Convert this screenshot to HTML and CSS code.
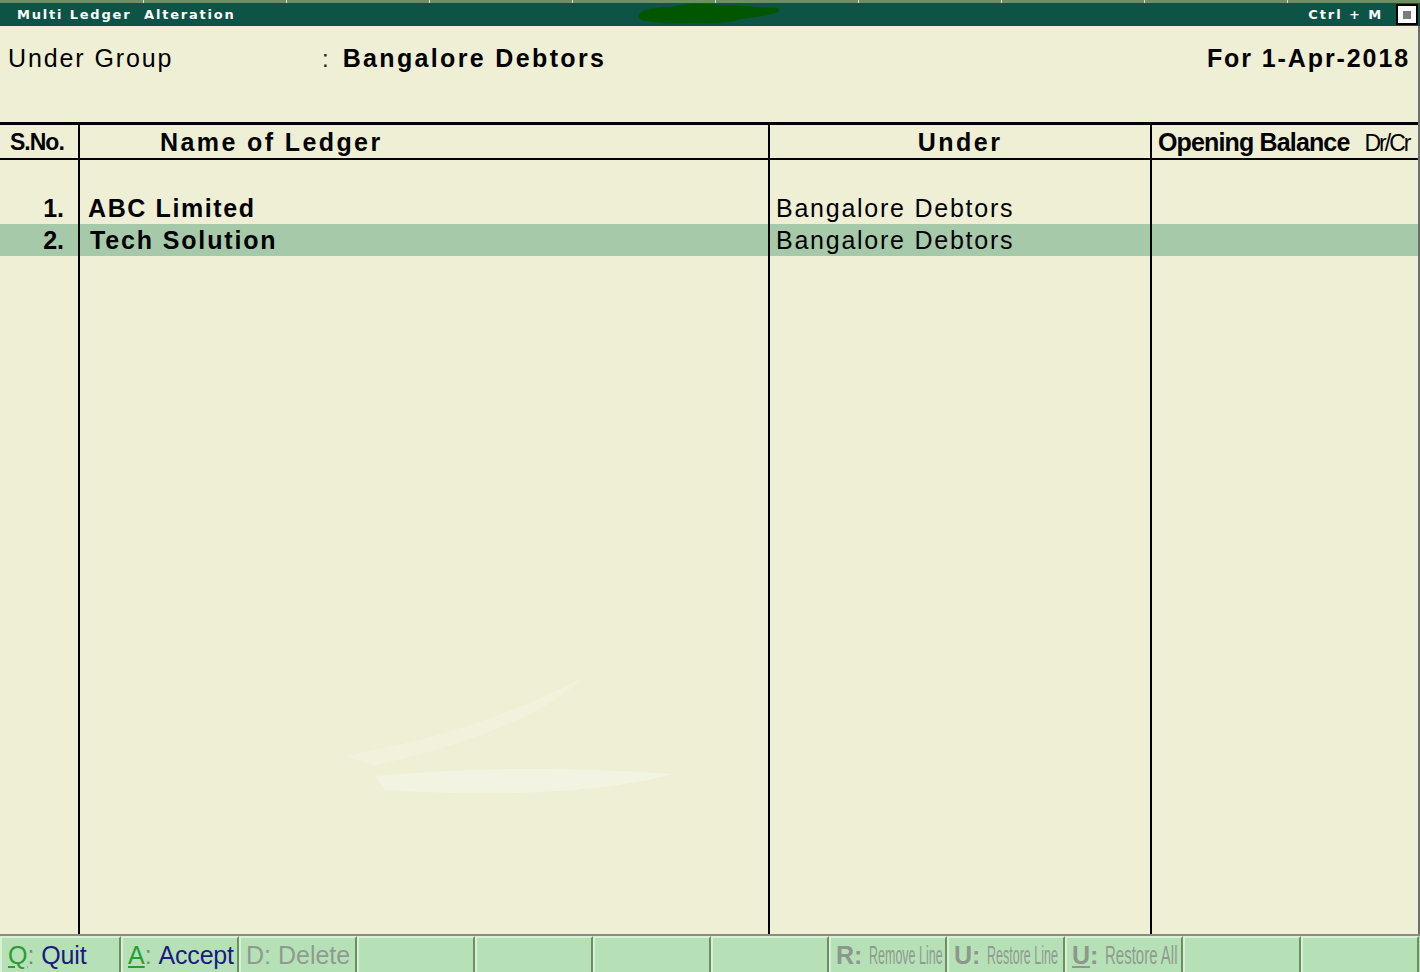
FILE: index.html
```html
<!DOCTYPE html>
<html lang="en">
<head>
<meta charset="utf-8">
<title>Multi Ledger Alteration</title>
<link rel="stylesheet" href="styles.css">
</head>
<body>
<div class="screen">
  <div class="titlebar">
    <div class="ticks"></div>
    <div class="bar">
      <span class="title">Multi Ledger&nbsp; Alteration</span>
      <svg class="scribble" width="146" height="24" viewBox="0 0 146 24" aria-hidden="true">
        <path d="M1,13 C3,7 16,5 34,5 C44,1 66,1 80,3 C96,3 112,5 140,6 C143,8 141,11 134,12 C128,14 118,15 104,17 C92,21 72,22 56,21 C40,22 22,21 8,19 C2,18 0,16 1,13 Z" fill="#015700"/>
      </svg>
      <span class="shortcut">Ctrl + M</span>
      <span class="winbox"><span class="winbox-dot"></span></span>
    </div>
  </div>

  <div class="main">
    <div class="header">
      <div class="field">
        <span class="label">Under Group</span>
        <span class="colon">:</span>
        <span class="value">Bangalore Debtors</span>
      </div>
      <div class="period">For 1-Apr-2018</div>
    </div>

    <div class="table">
      <div class="row thead">
        <div class="cell h-sno">S.No.</div>
        <div class="cell h-name">Name of Ledger</div>
        <div class="cell h-under">Under</div>
        <div class="cell h-bal"><span class="h-bal-label">Opening Balance</span><span class="h-drcr">Dr/Cr</span></div>
      </div>
      <div class="tbody">
        <div class="row spacer">
          <div class="cell"></div><div class="cell"></div><div class="cell"></div><div class="cell"></div>
        </div>
        <div class="row">
          <div class="cell num">1.</div>
          <div class="cell name">ABC Limited</div>
          <div class="cell under">Bangalore Debtors</div>
          <div class="cell"></div>
        </div>
        <div class="row selected">
          <div class="cell num">2.</div>
          <div class="cell name name-sel">Tech Solution</div>
          <div class="cell under">Bangalore Debtors</div>
          <div class="cell"></div>
        </div>
        <div class="row filler">
          <div class="cell"></div>
          <div class="cell smudge-cell">
            <svg class="smudge" width="360" height="150" viewBox="0 0 360 150" aria-hidden="true">
              <path d="M0,88 C70,74 150,56 240,8 C200,48 130,74 30,98 Z" fill="#f3f3e3" opacity="0.5"/>
              <path d="M30,108 C120,100 220,98 330,106 C260,124 160,130 40,122 Z" fill="#f4f4e6" opacity="0.65"/>
            </svg>
          </div>
          <div class="cell"></div>
          <div class="cell"></div>
        </div>
      </div>
    </div>
  </div>

  <div class="footer">
    <div class="btn first"><span class="key">Q</span><span class="sep">:</span> <span class="act">Quit</span></div>
    <div class="btn"><span class="key">A</span><span class="sep">:</span> <span class="act">Accept</span></div>
    <div class="btn off"><span>D:</span> <span>Delete</span></div>
    <div class="btn"></div>
    <div class="btn"></div>
    <div class="btn"></div>
    <div class="btn"></div>
    <div class="btn off"><span class="okey">R:</span> <span class="narrow">Remove Line</span></div>
    <div class="btn off"><span class="okey">U:</span> <span class="narrow">Restore Line</span></div>
    <div class="btn off"><span class="okey ul">U</span><span class="okey">:</span> <span class="narrow wider">Restore All</span></div>
    <div class="btn"></div>
    <div class="btn"></div>
  </div>
</div>
</body>
</html>
```

FILE: styles.css
```css
* { box-sizing: border-box; }

html, body {
  margin: 0;
  padding: 0;
  background: #eeefd5;
}

.screen {
  width: 1420px;
  height: 972px;
  display: flex;
  flex-direction: column;
  background: #eeefd5;
  font-family: "Liberation Sans", Arial, sans-serif;
  color: #000;
  overflow: hidden;
}

/* ---------- title bar ---------- */
.titlebar {
  flex: 0 0 26px;
  display: flex;
  flex-direction: column;
}

.ticks {
  height: 3px;
  background: repeating-linear-gradient(to right, #6f8e62 0, #6f8e62 142px, #d6dfcc 142px, #d6dfcc 143px);
  background-position: 1px 0;
}

.bar {
  position: relative;
  flex: 1;
  background: #0d5346;
  display: flex;
  align-items: center;
  padding-left: 17px;
  padding-right: 2px;
}

.title,
.shortcut {
  font-family: "DejaVu Sans", Verdana, sans-serif;
  font-weight: bold;
  font-size: 13px;
  color: #ffffff;
  letter-spacing: 1.8px;
  white-space: pre;
}

.scribble {
  position: absolute;
  left: 638px;
  top: -1px;
}

.shortcut {
  margin-left: auto;
  margin-right: 13px;
  letter-spacing: 1.9px;
}

.winbox {
  width: 22px;
  height: 21px;
  border: 2px solid #000;
  background: #fff;
  display: flex;
  align-items: center;
  justify-content: center;
}

.winbox-dot {
  width: 8px;
  height: 8px;
  background: #7b7b7b;
}

/* ---------- main area ---------- */
.main {
  flex: 1;
  display: flex;
  flex-direction: column;
  border-right: 2px solid #6e6e6e;
  min-height: 0;
}

.header {
  flex: 0 0 96px;
  display: flex;
  justify-content: space-between;
  align-items: flex-start;
  padding: 17px 8px 0 8px;
  line-height: 30px;
}

.field {
  display: flex;
  align-items: baseline;
}

.label {
  width: 314px;
  font-size: 25px;
  letter-spacing: 1.9px;
}

.colon {
  font-size: 24px;
  color: #222;
}

.value {
  margin-left: 14px;
  font-size: 25px;
  font-weight: bold;
  letter-spacing: 2.35px;
}

.period {
  font-size: 25px;
  font-weight: bold;
  letter-spacing: 1.9px;
}

/* ---------- table ---------- */
.table {
  flex: 1;
  display: flex;
  flex-direction: column;
  border-top: 3px solid #000;
  min-height: 0;
}

.row {
  display: grid;
  grid-template-columns: 80px 690px 382px 1fr;
  height: 32px;
}

.cell {
  border-right: 2px solid #000;
  white-space: nowrap;
  overflow: hidden;
}

.cell:last-child {
  border-right: none;
}

.thead {
  height: 35px;
  border-bottom: 2px solid #000;
  line-height: 34px;
  font-weight: bold;
}

.h-sno {
  padding-left: 10px;
  font-size: 23px;
  letter-spacing: -1px;
}

.h-name {
  padding-left: 80px;
  font-size: 25px;
  letter-spacing: 2.4px;
}

.h-under {
  text-align: center;
  font-size: 25px;
  letter-spacing: 2.5px;
}

.h-bal {
  display: flex;
  align-items: baseline;
  padding-left: 6px;
}

.h-bal-label {
  font-size: 25px;
  letter-spacing: -0.85px;
}

.h-drcr {
  margin-left: 15px;
  font-size: 23px;
  font-weight: normal;
  letter-spacing: -2px;
}

.tbody {
  flex: 1;
  display: flex;
  flex-direction: column;
  min-height: 0;
}

.tbody .row {
  line-height: 32px;
}

.num {
  text-align: right;
  padding-right: 14px;
  font-size: 25px;
  font-weight: bold;
}

.name {
  padding-left: 8px;
  font-size: 25px;
  font-weight: bold;
  letter-spacing: 1.6px;
}

.name-sel {
  padding-left: 10px;
  letter-spacing: 1.85px;
}

.under {
  padding-left: 6px;
  font-size: 25px;
  letter-spacing: 1.75px;
}

.selected {
  background: #a6c9a9;
}

.filler {
  flex: 1;
  height: auto;
}

.smudge-cell {
  position: relative;
}

.smudge {
  position: absolute;
  left: 265px;
  top: 412px;
}

/* ---------- footer ---------- */
.footer {
  flex: 0 0 38px;
  display: grid;
  grid-template-columns: 121px repeat(11, 118px) 1fr;
  border-top: 2px solid #8b8b86;
  background: #b6e1b7;
}

.btn {
  border-top: 2px solid #d9f0d7;
  border-left: 2px solid #d9f0d7;
  border-right: 2px solid #6c8f60;
  background: #b6e1b7;
  padding-left: 5px;
  font-size: 25px;
  line-height: 34px;
  white-space: nowrap;
  overflow: hidden;
  color: #1b1b7e;
}

.btn.first {
  padding-left: 6px;
}

.key {
  color: #2b9b35;
  text-decoration: underline;
  text-decoration-color: #2b9b35;
  text-underline-offset: 2px;
}

.sep {
  color: #6e9570;
}

.act {
  color: #1b1b7e;
  letter-spacing: -0.2px;
}

.off {
  color: #8f9b90;
}

.okey {
  font-weight: bold;
  color: #8c978d;
}

.ul {
  text-decoration: underline;
  text-underline-offset: 2px;
}

.narrow {
  display: inline-block;
  transform: scaleX(0.5);
  transform-origin: left center;
  color: #8f9b90;
  font-size: 25px;
}

.narrow.wider {
  transform: scaleX(0.6);
}
```
